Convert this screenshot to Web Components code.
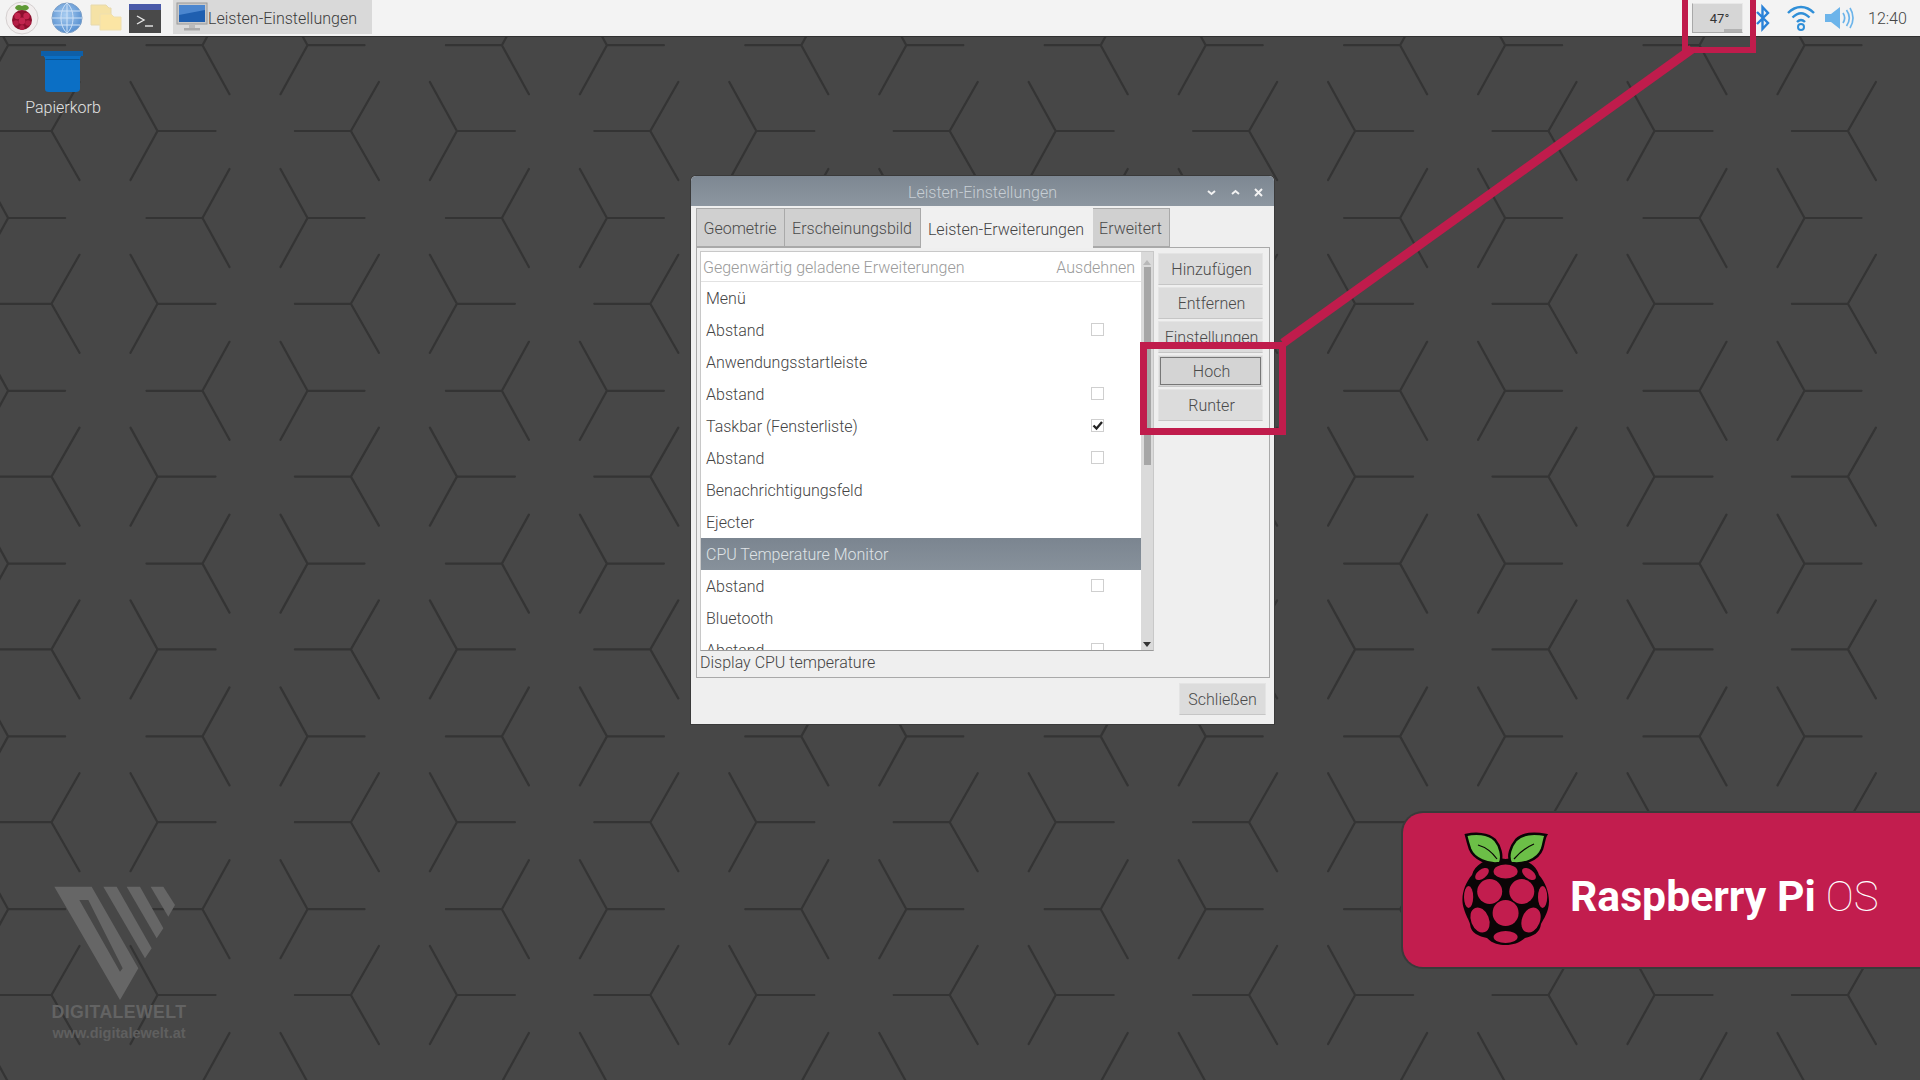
<!DOCTYPE html>
<html lang="de"><head><meta charset="utf-8"><title>Leisten-Einstellungen</title>
<style>html,body{margin:0;padding:0;width:1920px;height:1080px;overflow:hidden;background:#474747;font-family:Roboto,"Liberation Sans",sans-serif;font-weight:300;font-size:16px}</style>
</head><body>
<rp-desktop>
  <rp-panel slot="panel"></rp-panel>
  <rp-desktop-icon>Papierkorb</rp-desktop-icon>
  <rp-window title="Leisten-Einstellungen">
    <rp-tab slot="tabs" style="width:89px">Geometrie</rp-tab>
    <rp-tab slot="tabs" style="width:136px">Erscheinungsbild</rp-tab>
    <rp-tab slot="tabs" active style="width:172px">Leisten-Erweiterungen</rp-tab>
    <rp-tab slot="tabs" style="width:77px">Erweitert</rp-tab>
    <rp-list slot="list">
      <rp-row>Menü</rp-row>
      <rp-row check>Abstand</rp-row>
      <rp-row>Anwendungsstartleiste</rp-row>
      <rp-row check>Abstand</rp-row>
      <rp-row check checked>Taskbar (Fensterliste)</rp-row>
      <rp-row check>Abstand</rp-row>
      <rp-row>Benachrichtigungsfeld</rp-row>
      <rp-row>Ejecter</rp-row>
      <rp-row selected>CPU Temperature Monitor</rp-row>
      <rp-row check>Abstand</rp-row>
      <rp-row>Bluetooth</rp-row>
      <rp-row check>Abstand</rp-row>
    </rp-list>
    <rp-button slot="actions">Hinzufügen</rp-button>
    <rp-button slot="actions">Entfernen</rp-button>
    <rp-button slot="actions">Einstellungen</rp-button>
    <rp-button slot="actions" focused>Hoch</rp-button>
    <rp-button slot="actions">Runter</rp-button>
    <span slot="status">Display CPU temperature</span>
    <rp-button slot="footer" class="close">Schließen</rp-button>
  </rp-window>
  <rp-watermark></rp-watermark>
  <rp-badge></rp-badge>
  <rp-callout></rp-callout>
</rp-desktop>
<script>
function def(name, css, html, init){
  customElements.define(name, class extends HTMLElement{
    constructor(){super();const r=this.attachShadow({mode:'open'});
      r.innerHTML='<style>'+css+'</style>'+(typeof html==='function'?html(this):html);
      if(init)init(r,this);}
  });
}
function berry(fill,stroke,leaf){return `
<path d="M44.6 27C30 24 14 31 11 43C3 52 -1 66 3 77C5 84 8 88 9 92C10 102 18 104 26 106C32 112 38 113 44.6 113C52 113 58 111 64 106C72 104 79 101 80 92C82 88 85 84 87 77C90 66 86 52 78 43C75 31 60 24 44.6 27Z" fill="${stroke}"/>
<path d="M39 31C27 33 13 27 9 17C7 11 6 7 5 3C14 1 27 1 34 8C39 14 42 24 39 31Z" fill="${leaf}" stroke="${stroke}" stroke-width="2.5"/>
<path d="M50 31C62 33 77 28 81 17C83 11 83 6 85 3C75 1 62 1 55 8C50 14 46 24 50 31Z" fill="${leaf}" stroke="${stroke}" stroke-width="2.5"/>
<path d="M17 13C24 15 31 20 36 27M73 12C66 15 59 20 53 27" fill="none" stroke="${stroke}" stroke-width="1.2"/>
<g fill="${fill}">
<ellipse cx="44.6" cy="39.5" rx="12" ry="7"/><circle cx="28.7" cy="59.5" r="12.5"/><circle cx="60.8" cy="59.5" r="12.5"/>
<circle cx="44.6" cy="81" r="13"/><ellipse cx="7.6" cy="65" rx="4.6" ry="11"/><ellipse cx="81.6" cy="65" rx="4.6" ry="11"/>
<ellipse cx="21" cy="42" rx="8" ry="4.5" transform="rotate(-38 21 42)"/><ellipse cx="68" cy="42" rx="8" ry="4.5" transform="rotate(38 68 42)"/>
<ellipse cx="19" cy="88" rx="9" ry="13" transform="rotate(-22 19 88)"/><ellipse cx="70" cy="88" rx="9" ry="13" transform="rotate(22 70 88)"/>
<ellipse cx="44.6" cy="105" rx="12" ry="6"/></g>`;}

def('rp-desktop',`:host{display:block;position:relative;width:1920px;height:1080px;overflow:hidden;background:#474747}
 svg{position:absolute;left:0;top:0}`,
 `<svg width="1920" height="1080" aria-hidden="true"><path id="h" fill="none" stroke="#343434" stroke-width="2.2" stroke-linecap="round" stroke-linejoin="round"/></svg><slot name="panel"></slot><slot></slot>`,
 r=>{let d='';const W=299.4,H=172.8;
   for(let i=-1;i<8;i++)for(let j=-2;j<8;j++){const x=+(i*W-.5).toFixed(1),y=+(131+j*H).toFixed(1),y2=+(y+87).toFixed(1);
     d+=`M${x-4} ${y}H${x+52}M${x+80} ${y-49}L${x+52} ${y}L${x+80} ${y+49}`;
     d+=`M${x+216} ${y}H${x+158}M${x+131} ${y-49}L${x+158} ${y}L${x+131} ${y+49}`;
     d+=`M${x+147} ${y2}H${x+203}M${x+230} ${y2-49}L${x+203} ${y2}L${x+230} ${y2+49}`;
     d+=`M${x+365} ${y2}H${x+308}M${x+281} ${y2-49}L${x+308} ${y2}L${x+281} ${y2+49}`;}
   r.getElementById('h').setAttribute('d',d);});

def('rp-panel',`:host{display:flex;align-items:stretch;position:relative;height:36px;background:#f3f3f3;border-bottom:1px solid #2f2f2f;color:#3c3c3c;font-size:16px;box-sizing:content-box}
 .launch{display:flex;align-items:center;width:173px;flex:none}
 .launch svg{flex:none;display:block}
 .task{display:flex;align-items:center;width:199px;height:34px;background:#d9d9d9;flex:none;padding-left:3px;box-sizing:border-box}
 .task span{padding-top:2px}
 .spacer{flex:1}
 .tray{display:flex;align-items:center;flex:none}
 .temp{width:51px;height:30px;box-sizing:border-box;margin-top:-1px;padding:2px 0 0 4px;background:#d6d6d6;border:1px solid #a9a9a9;border-top-color:#e8e8e8;border-right-color:#e8e8e8;font-size:13px;font-weight:400;display:flex;align-items:center;justify-content:center;color:#333;position:relative}
 .temp i{position:absolute;right:0;bottom:0;width:18px;height:3px;background:#b2b2b2}
 .clock{font-size:16px;width:52px;padding:1px 0 0 14px;color:#444}`,
 `<div class="launch">
  <svg width="34" height="34" viewBox="0 0 34 34" style="margin-left:5px"><circle cx="17" cy="17" r="16" fill="#f2eeee" stroke="#d5d0d0"/>
   <path d="M17 5C14 3 11 4 10 7C12 10 15 10 17 9C19 10 22 10 24 7C23 4 20 3 17 5Z" fill="#5f9a36"/>
   <circle cx="17" cy="19" r="10" fill="#8d0f2e"/><circle cx="12.5" cy="15" r="3.2" fill="#c4254f"/><circle cx="21.5" cy="15" r="3.2" fill="#c4254f"/><circle cx="17" cy="20" r="3.4" fill="#c4254f"/><circle cx="11" cy="22" r="2.8" fill="#b51e45"/><circle cx="23" cy="22" r="2.8" fill="#b51e45"/><circle cx="17" cy="26.5" r="2.5" fill="#b51e45"/></svg>
  <svg width="32" height="32" viewBox="0 0 32 32" style="margin-left:12px"><defs><radialGradient id="g" cx=".45" cy=".4" r=".7"><stop offset="0" stop-color="#a9cdf1"/><stop offset="1" stop-color="#4a86cb"/></radialGradient></defs><circle cx="16" cy="16" r="15" fill="url(#g)" stroke="#7d9fc6"/><path d="M1 16H31M3 9H29M3 23H29M16 1V31M16 1C8 8 8 24 16 31M16 1C24 8 24 24 16 31" fill="none" stroke="#cfe2f7" stroke-width="1"/></svg>
  <svg width="34" height="30" viewBox="0 0 34 30" style="margin-left:6px"><path d="M2 2H17L20 5H22V22H2Z" fill="#f5e2a6" stroke="#e6d9ae"/><path d="M11 11H22L25 14H32V27H11Z" fill="#fbe5a4" stroke="#efe0b0"/></svg>
  <svg width="32" height="29" viewBox="0 0 32 29" style="margin-left:6px"><rect width="32" height="29" fill="#494949"/><rect width="32" height="6" fill="#4a5aa8"/><path d="M8 12L15 16L8 20" fill="none" stroke="#e8e8e8" stroke-width="1.4"/><path d="M16 22H24" stroke="#e8e8e8" stroke-width="1.4"/></svg>
 </div>
 <div class="task"><svg width="32" height="30" viewBox="0 0 32 30" style="flex:none"><rect x="1" y="1" width="30" height="21" fill="#c9c9c9" stroke="#9a9a9a"/><rect x="3" y="3" width="26" height="17" fill="#1f5fb0"/><path d="M3 3H29V8L3 13Z" fill="#4b86cf"/><rect x="13" y="22" width="6" height="4" fill="#bbb"/><rect x="8" y="26" width="16" height="2.5" fill="#aaa"/></svg><span>Leisten-Einstellungen</span></div>
 <div class="spacer"></div>
 <div class="tray">
  <div class="temp">47°<i></i></div>
  <svg width="16" height="30" viewBox="0 0 16 30" style="margin-left:12px"><path d="M2 9L13 20L7.5 26V4L13 10L2 21" fill="none" stroke="#2a82d8" stroke-width="2.4"/></svg>
  <svg width="30" height="26" viewBox="0 0 30 26" style="margin-left:15px"><g fill="none" stroke="#2f8fd8" stroke-width="2.4"><path d="M2 8C10 0 20 0 28 8"/><path d="M6.5 12.5C12 7 18 7 23.500 12.500"/><path d="M11 17C13.500 14.500 16.500 14.500 19 17"/></g><circle cx="15" cy="22" r="3" fill="none" stroke="#2f8fd8" stroke-width="2"/></svg>
  <svg width="30" height="26" viewBox="0 0 30 26" style="margin-left:8px"><path d="M1 9H7L16 2V24L7 17H1Z" fill="#6cb4ea"/><g fill="none" stroke="#6cb4ea" stroke-width="1.7"><path d="M19 8C21 11 21 15 19 18"/><path d="M22.500 5C26 10 26 16 22.500 21"/><path d="M26 3C30 9 30 17 26 23"/></g></svg>
  <div class="clock">12:40</div>
 </div>`);

def('rp-desktop-icon',`:host{position:absolute;left:19px;top:49px;width:86px;display:flex;flex-direction:column;align-items:center;color:#e2e2e2;font-size:16px;line-height:20px}
 svg{display:block;margin-bottom:5px}
 span{padding-left:2px}`,
 `<svg width="44" height="44" viewBox="0 0 44 44"><path d="M1 3H43L40 9V40C40 42 38 43 36 43H9C6 43 5 42 5 40V9Z" fill="#0b6fc5"/><path d="M1 2H43V7H1Z" fill="#0e5fa8"/><path d="M5 10H40L39 11H6Z" fill="#095494"/></svg><span><slot></slot></span>`);

def('rp-window',`:host{position:absolute;left:691px;top:176px;width:583px;height:548px;display:flex;flex-direction:column;background:#efefef;border-radius:5px 5px 0 0;box-shadow:0 0 0 1px #3a3a3a;color:#444}
 .title{height:30px;box-sizing:border-box;padding-top:2px;flex:none;display:grid;grid-template-columns:1fr auto 1fr;align-items:center;background:linear-gradient(#7d8792,#8c96a0);color:#c7ced4;border-radius:5px 5px 0 0}
 .title b{font-weight:300;grid-column:2}
 .ctl{grid-column:3;justify-self:end;display:flex;gap:12.5px;padding-right:10px}
 .ctl svg{display:block}
 .body{flex:1;display:flex;flex-direction:column;padding:2px 4px 0 5px;min-height:0}
 .tabs{display:flex;height:39px;flex:none}
 .page{height:431px;flex:none;box-sizing:border-box;border:1px solid #a9a9a9;padding:3px 3px 0 3px;display:flex;flex-direction:column}
 .top{display:flex;height:400px;flex:none;gap:4px}
 .acts{display:flex;flex-direction:column;gap:2px;padding-top:2px;width:105px;flex:none}
 .status{height:23px;display:flex;align-items:center;line-height:22px;color:#444}
 .foot{flex:1;display:flex;justify-content:flex-end;align-items:flex-start;padding:5px 4px 0 0}`,
 el=>`<div class="title"><b>${el.getAttribute('title')}</b><div class="ctl">
  <svg width="11" height="11" viewBox="0 0 11 11"><path d="M2 4L5.500 7L9 4" fill="none" stroke="#f2f2f2" stroke-width="2"/></svg>
  <svg width="11" height="11" viewBox="0 0 11 11"><path d="M2 7L5.500 4L9 7" fill="none" stroke="#f2f2f2" stroke-width="2"/></svg>
  <svg width="11" height="11" viewBox="0 0 11 11"><path d="M2 2L9 9M9 2L2 9" fill="none" stroke="#f2f2f2" stroke-width="2"/></svg></div></div>
 <div class="body"><div class="tabs"><slot name="tabs"></slot></div>
 <div class="page"><div class="top"><slot name="list"></slot><div class="acts"><slot name="actions"></slot></div></div><div class="status"><slot name="status"></slot></div></div>
 <div class="foot"><slot name="footer"></slot></div></div>`);

def('rp-tab',`:host{display:flex;align-items:center;justify-content:center;box-sizing:border-box;height:39px;padding:2px 1px 0 0;background:#d0d0d0;border:1px solid #a9a9a9;border-left:0;color:#4a4a4a;white-space:nowrap;flex:none}
 :host(:first-child){border-left:1px solid #a9a9a9}
 :host([active]){background:#f0f0f0;border-color:#f0f0f0;color:#444;height:40px;position:relative;z-index:1}`,`<slot></slot>`);

def('rp-list',`:host{display:flex;width:454px;flex:none;height:400px;border:1px solid #c8c8c8;border-bottom-color:#9a9a9a;box-sizing:border-box;background:#fff}
 .main{flex:1;min-width:0;display:flex;flex-direction:column;overflow:hidden}
 .head{height:30px;flex:none;display:flex;align-items:center;justify-content:space-between;color:#9a9a9a;border-bottom:1px solid #e2e2e2;padding:1px 6px 0 2px;box-sizing:border-box;background:#fff}
 .rows{flex:1;overflow:hidden}
 .bar{width:12px;flex:none;background:#dadada;position:relative;display:flex;flex-direction:column;align-items:center}
 .bar svg{display:block;flex:none}
 .thumb{width:7px;height:198px;background:#a6a6a6;flex:none}
 .grow{flex:1}`,
 `<div class="main"><div class="head"><span>Gegenwärtig geladene Erweiterungen</span><span>Ausdehnen</span></div><div class="rows"><slot></slot></div></div>
 <div class="bar"><svg width="8" height="10" viewBox="0 0 8 10" style="margin-top:5px"><path d="M0 8H8L4 3Z" fill="#b8b8b8"/></svg><div class="thumb"></div><div class="grow"></div><svg width="8" height="10" viewBox="0 0 8 10" style="margin-bottom:1px"><path d="M0 3H8L4 8Z" fill="#333"/></svg></div>`);

def('rp-row',`:host{display:flex;align-items:center;justify-content:space-between;height:32px;box-sizing:border-box;padding:0 0 0 5px;color:#444;background:#fff;white-space:nowrap}
 :host([selected]){background:linear-gradient(#7b8590,#87919b);color:#dfe3e6}
 .box{width:13px;height:13px;box-sizing:border-box;border:1px solid #cfcfcf;background:#fff;margin:-2px 37px 0 0;display:none}
 :host([check]) .box{display:block}
 svg{display:none;width:11px;height:11px}
 :host([checked]) svg{display:block}`,
 `<span><slot></slot></span><div class="box"><svg viewBox="0 0 11 11"><path d="M1.500 5.500L4.500 8.500L10 2" fill="none" stroke="#222" stroke-width="2.300"/></svg></div>`);

def('rp-button',`:host{display:flex;align-items:center;justify-content:center;box-sizing:border-box;height:32px;padding-left:2px;background:#dcdcdc;border:1px solid #e4e4e4;border-bottom-color:#c6c6c6;color:#4a4a4a;white-space:nowrap;flex:none;position:relative}
 :host(.close){width:87px;padding-left:0}
 :host([focused]){background:#d4d4d4;outline:1px solid #777;outline-offset:-3px}`,`<slot></slot>`);

def('rp-watermark',`:host{position:absolute;left:20px;top:870px;width:200px;height:180px;color:#636363;font-family:"Liberation Sans",Arial,sans-serif;font-weight:700}
 svg{display:block}
 .t{position:absolute;left:0;width:184px;text-align:center;white-space:nowrap;margin-left:7px}
 .a{top:132px;font-size:17.7px;letter-spacing:.4px;line-height:20px}
 .b{top:155px;font-size:14.500px;line-height:16px;color:#5f5f5f}`,
 `<svg width="200" height="135" viewBox="0 0 600 405"><g fill="#666"><path d="M103 50H215L355 295L300 390Z M178 90L300 305L308 295L205 90Z" fill-rule="evenodd"/><path d="M250 50H290L395 235L375 265Z"/><path d="M320 50H360L430 175L410 205Z"/><path d="M392 50H430L465 105L445 140Z"/></g></svg><div class="t a">DIGITALEWELT</div><div class="t b">www.digitalewelt.at</div>`);

def('rp-badge',`:host{position:absolute;left:1403px;top:813px;width:517px;height:154px;box-sizing:border-box;background:#c21d4e;border-radius:20px 0 0 20px;box-shadow:0 0 0 2px #3a3a3a;display:flex;align-items:center;padding-left:58px;color:#fff;font-family:Roboto,"Liberation Sans",sans-serif;white-space:nowrap}
 svg{display:block;flex:none;margin-right:19px}
 span{margin-top:12px}
 b{font-weight:700;font-size:42.7px}
 i{font-style:normal;font-weight:100;font-size:42px;margin-left:10px}`,
 `<svg width="90" height="113" viewBox="0 0 90 113" style="margin-top:-3px">${berry('#c21d4e','#0a0506','#6cbf47')}</svg><span><b>Raspberry Pi</b><i>OS</i></span>`);

def('rp-callout',`:host{position:absolute;left:0;top:0;width:1920px;height:1080px;pointer-events:none}
 svg{display:block}`,
 `<svg width="1920" height="1080"><g fill="none" stroke="#c01c4c"><rect x="1143.500" y="345.500" width="139" height="86" stroke-width="7"/><rect x="1685" y="-10" width="68" height="60" stroke-width="6"/><path d="M1692 49L1283 343" stroke-width="9"/></g></svg>`);
</script>
</body></html>
